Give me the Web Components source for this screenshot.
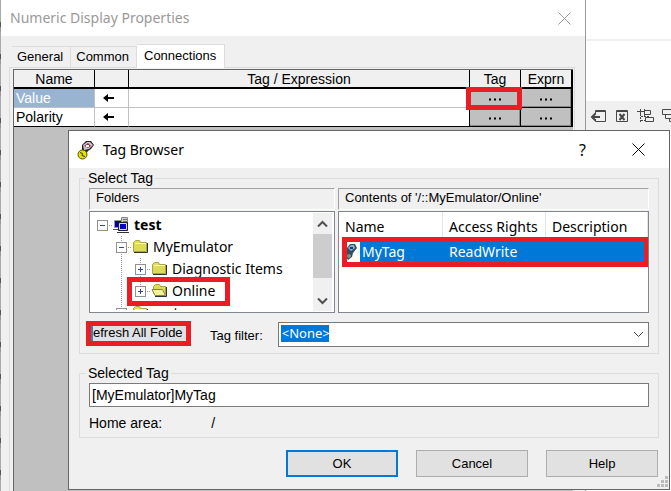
<!DOCTYPE html>
<html lang="en">
<head>
<meta charset="utf-8">
<title>Numeric Display Properties</title>
<style>
    html, body {
        margin: 0px;
        height: 100%;
        overflow: hidden;
        background: #fff;
    }

    body {
        font: 13px/16px "Liberation Sans", Arial, sans-serif;
        color: #000;
        --ui: "Noto Sans", "Segoe UI", sans-serif;
    }
</style>
</head>
<body>
<studio-desktop>
    <app-window class="properties" slot="back" caption="Numeric Display Properties" inactive>
        <tab-strip></tab-strip>
        <connections-grid></connections-grid>
    </app-window>
    <app-window class="browser" slot="front" caption="Tag Browser" help>
        <tag-icon slot="icon"></tag-icon>
        <tag-browser></tag-browser>
    </app-window>
</studio-desktop>

<script>
function attach(element, html) {
    const template = document.createElement("template")
    template.innerHTML = html
    element.attachShadow({mode: "open"}).appendChild(template.content.cloneNode(true))
}

class StudioDesktop extends HTMLElement {
    constructor() {
        super()
        attach(this, `
<style>
    :host { display: block; position: relative; height: 100vh; overflow: hidden; }
    .back { display: flex; flex-direction: column; }
    .ribbon { height: 39px; border-bottom: 2px solid #efefef; }
    .space { height: 60px; }
    .tools {
        display: flex; align-items: center; gap: 8px; height: 29px; box-sizing: border-box;
        margin-left: auto; width: 85px; padding-left: 4px; background: #f0f0f0; overflow: hidden;
    }
    button { border: 0; background: none; padding: 0; flex: none; height: 16px; }
    svg { display: block; fill: none; stroke: #484848; }
    ::slotted(.properties) { position: absolute; inset: 0 85px 0 1px; }
    ::slotted(.browser) { position: absolute; left: 68px; right: 1px; top: 130px; }
    .edge { position: absolute; left: 0; top: 0; bottom: 0; width: 1px;
        background: repeating-linear-gradient(#aaa 0 22px, #555 22px 27px, #999 27px 32px); }
</style>
<div class="back">
    <div class="ribbon"></div>
    <div class="space"></div>
    <div class="tools">
        <button aria-label="Insert"><svg width="17" height="16"><path d="M5.500 6V2.500H15.500V13.500H5.500V11M6 3.500H15"/><path d="M2 9H10M5.500 5.500L2 9L5.500 12.500" stroke-width="2"/></svg></button>
        <button aria-label="Delete"><svg width="14" height="16"><path d="M1.500 2.500H12.500V13.500H1.500ZM2 3.500H12"/><path d="M4.500 6L9.500 12M9.500 6L4.500 12" stroke-width="2"/></svg></button>
        <button aria-label="Align"><svg width="17" height="16"><path d="M3.500 1V6M0 3.500H7M7.500 2.500H13.500V6.500H7.500ZM8.500 9.500H16.500V13.500H8.500ZM7.500 1V8"/><path d="M3.500 6V15M4 8.500H12M4 12.500H8" stroke-dasharray="2 1"/></svg></button>
        <button aria-label="Arrange"><svg width="17" height="16"><path d="M.500 1.500H10.500V6.500H.500ZM10.500 4.500H14.500V10.500H3.500V7M12 8.500H16V13.500H7.500V10.500"/></svg></button>
    </div>
</div>
<div class="edge"></div>
<slot name="back"></slot>
<slot name="front"></slot>`)
    }
}

class AppWindow extends HTMLElement {
    constructor() {
        super()
        attach(this, `
<style>
    :host { display: flex; flex-direction: column; background: #f0f0f0; border: 1px solid #666; box-sizing: border-box; }
    :host([inactive]) { border-width: 0 1px 0 0; border-color: #999; }
    header {
        display: flex; align-items: center; flex: none; height: 37px; box-sizing: border-box;
        padding: 0 24px 0 8px; background: #fff; font: 14px/20px var(--ui);
    }
    :host([inactive]) header { height: 36px; padding: 0 14px 0 9px; color: #999; }
    ::slotted([slot=icon]) { margin-right: 8px; }
    h1 { flex: 1; margin: 0; font: inherit; white-space: nowrap; }
    button { border: 0; padding: 0; background: none; font: 16px/20px var(--ui); color: inherit; }
    .help { margin-right: 46px; }
    :host(:not([help])) .help { display: none; }
    svg { display: block; stroke: currentColor; }
</style>
<header>
    <slot name="icon"></slot>
    <h1></h1>
    <button class="help">?</button>
    <button aria-label="Close"><svg width="13" height="13"><path d="M.500 .500L12.500 12.500M12.500 .500L.500 12.500"/></svg></button>
</header>
<slot></slot>`)
    }

    connectedCallback() {
        this.shadowRoot.querySelector("h1").textContent = this.getAttribute("caption")
    }
}

// Red frame drawn over whatever is slotted in
class MarkFrame extends HTMLElement {
    constructor() {
        super()
        attach(this, `
<style>
    :host { display: block; position: relative; }
    i { position: absolute; inset: var(--mark-inset, -3px); border: 5px solid #ea1c24; pointer-events: none; z-index: 2; }
</style>
<slot></slot><i></i>`)
    }
}

class TabStrip extends HTMLElement {
    constructor() {
        super()
        attach(this, `
<style>
    :host { display: flex; align-items: flex-end; flex: none; padding: 8px 0 0 11px; position: relative; z-index: 1; margin-bottom: -1px; }
    button {
        height: 21px; margin: 0 0 1px; padding: 0 7px 0 5px; border: 1px solid #dcdcdc; border-width: 1px 1px 0 0;
        background: #f0f0f0; font: inherit; color: inherit;
    }
    button:first-child { border-left-width: 1px; }
    button[aria-selected=true] { height: 24px; margin: 0; padding: 0 8px 2px 7px; background: #fff; }
</style>
<button role="tab">General</button>
<button role="tab">Common</button>
<button role="tab" aria-selected="true">Connections</button>`)
        this.shadowRoot.addEventListener("click", event => {
            const tab = event.target.closest("button")
            if (!tab) return
            this.shadowRoot.querySelectorAll("button").forEach(b => b.setAttribute("aria-selected", b == tab))
        })
    }
}

class ConnectionsGrid extends HTMLElement {
    constructor() {
        super()
        const arrow = `<svg width="11" height="9"><path d="M2 4H11" stroke="#000" stroke-width="2"/><path d="M0 4L5 0V8Z"/></svg>`
        attach(this, `
<style>
    :host { display: flex; flex: 1; margin: 0 10px 0 8px; padding: 1px 1px 0 3px; border: 1px solid #dcdcdc; border-bottom: 0; }
    .client { flex: 1; background: #c0c0c0; border: 1px solid #666; border-width: 1px 0 0 1px; }
    table { width: 100%; table-layout: fixed; border-spacing: 0; background: #fff; border-right: 1px solid #000; }
    th, td { padding: 0; border-right: 1px solid #000; box-sizing: border-box; }
    th { height: 19px; border-bottom: 2px solid #000; background: #f0f0f0; font: 14px/16px "Liberation Sans", Arial, sans-serif; }
    td { height: 19px; line-height: 18px; border-right-color: #c0c0c0; border-bottom: 1px solid #c0c0c0; }
    tr:last-child td, .more { border-bottom-color: #000; }
    .more, td:nth-child(3) { border-right-color: #000; }
    .name { padding-left: 2px; font-size: 14px; }
    .current { background: #99b4d1; color: #fff; }
    .arrow { padding-left: 8px; }
    svg { display: block; }
    input { display: block; width: 100%; height: 18px; box-sizing: border-box; border: 0; padding: 0 2px; outline: 0; background: none; font: inherit; }
    .more button {
        display: flex; align-items: center; justify-content: center; width: 100%; height: 18px; padding: 4px 0 0 2px;
        border: 1px solid #888; border-width: 0 1px 1px 0; background: #c0c0c0;
    }
    mark-frame { --mark-inset: -2px -2px -3px -4px; }
</style>
<div class="client">
<table>
    <colgroup><col style="width:81px"><col style="width:34px"><col><col style="width:51px"><col style="width:51px"></colgroup>
    <thead><tr><th>Name</th><th></th><th>Tag / Expression</th><th>Tag</th><th>Exprn</th></tr></thead>
    <tbody></tbody>
</table>
</div>`)
        const dots = `<svg width="13" height="3"><path d="M0 .500h2v2h-2zM5 .500h2v2h-2zM10 .500h2v2h-2z"/></svg>`
        const body = this.shadowRoot.querySelector("tbody")
        ;["Value", "Polarity"].forEach((name, i) => {
            const more = `<button aria-label="Browse tags for ${name}">${dots}</button>`
            const row = document.createElement("tr")
            row.innerHTML = `
                <td class="name ${i == 0 ? "current" : ""}">${name}</td>
                <td class="arrow">${arrow}</td>
                <td><input aria-label="${name} expression"></td>
                <td class="more">${i == 0 ? `<mark-frame>${more}</mark-frame>` : more}</td>
                <td class="more"><button aria-label="Edit ${name} expression">${dots}</button></td>`
            body.appendChild(row)
        })
    }
}

class TagIcon extends HTMLElement {
    constructor() {
        super()
        attach(this, `
<style>
    :host { display: block; flex: none; }
    svg { display: block; }
</style>
<svg width="18" height="20" viewBox="0 0 18 20">
    <path d="M5 5L9 1L14 1L17 5L14 9L11 11L9 14L5 12Z" fill="#222"/>
    <path d="M6 5L10 2L13 2L16 5L12 9L7 10Z" fill="#c8c8c8"/>
    <path d="M7 6L11 3L14 6L11 8Z" fill="#a03050"/><path d="M9 5h3v2h-3z" fill="#fff"/>
    <circle cx="5.500" cy="14.500" r="4.500" fill="#e6e000" stroke="#555500"/>
    <path d="M3 12.500L5.500 13.500L5 15.500L8 16.500" fill="none" stroke="#333"/>
</svg>`)
    }
}

class GroupBox extends HTMLElement {
    constructor() {
        super()
        attach(this, `
<style>
    :host { display: block; }
    fieldset { margin: 0; padding: 2px 9px 6px; border: 1px solid #dcdcdc; min-width: 0; }
    legend { margin-left: -3px; padding: 0 2px; font-size: 14px; line-height: 16px; }
</style>
<fieldset><legend></legend><slot></slot></fieldset>`)
    }

    connectedCallback() {
        this.shadowRoot.querySelector("legend").textContent = this.getAttribute("caption")
    }
}

class ListPane extends HTMLElement {
    constructor() {
        super()
        attach(this, `
<style>
    :host { display: flex; flex-direction: column; gap: 1px; min-width: 0; }
    .caption {
        height: 22px; box-sizing: border-box; padding: 1px 6px; border: 1px solid;
        border-color: #a0a0a0 #fff #fff #a0a0a0; white-space: nowrap;
    }
    .box { display: flex; height: 102px; box-sizing: border-box; border: 1px solid #828790; background: #fff; overflow: hidden; }
</style>
<div class="caption"><slot name="caption"></slot></div>
<div class="box"><slot></slot></div>`)
    }
}

const treeIcons = {
    computer: `<svg width="18" height="18"><path d="M8.500 1.500h6v8h-6z" fill="#ccc" stroke="#888"/><path d="M10 3.500h4M10 5.500h4" stroke="#777"/><path d="M1.500 4.500h7v7h-7z" fill="#0000a0" stroke="#999"/><path d="M0 13.500h6" stroke="#555"/><path d="M5.500 6.500h9v8h-9z" fill="#0000c8" stroke="#222"/><path d="M6.500 7.500h7v6h-7z" fill="none" stroke="#ddd"/><path d="M4 16.500h12" stroke="#333"/></svg>`,
    folder: `<svg width="18" height="16"><path d="M1.500 12.500V3.500L3.500 1.500H7.500L8.500 3.500H14.500V12.500Z" fill="#dedb58" stroke="#a8a448"/><path d="M3 4.500H14" stroke="#fbf8a8"/><path d="M2 13.500H15.500V4" fill="none" stroke="#333"/></svg>`,
    open: `<svg width="18" height="16"><path d="M2.500 10.500V3.500L4.500 1.500H8.500L9.500 3.500H14.500V11.500Z" fill="#dedb58" stroke="#a8a448"/><path d="M1 6.500H11.500L14.500 12.500H4Z" fill="#f5f19a" stroke="#8a8838"/><path d="M4 13.500H15.500V4" fill="none" stroke="#333"/></svg>`
}

class TreeNode extends HTMLElement {
    constructor() {
        super()
        attach(this, `
<style>
    :host { display: flex; align-items: center; height: 22px; flex: none; font: 14px/20px var(--ui); white-space: nowrap; }
    :host([kind=computer]) { font-weight: bold; }
    svg { display: block; flex: none; }
    .icon { width: 18px; margin: 0 3px 0 1px; }
</style>
<slot></slot>`)
    }

    connectedCallback() {
        const depth = Number(this.getAttribute("depth"))
        const state = this.getAttribute("state")
        let html = ""
        for (let level = 0; level <= depth; level++) {
            const own = level == depth
            let lines = ""
            if (level > 0) {
                lines = `<path d="M9.500 0V${own && this.hasAttribute("last") ? 11 : 22}" stroke="#999" stroke-dasharray="1 1"/>`
            }
            if (own) {
                lines += `<path d="M10 11.500H19" stroke="#999" stroke-dasharray="1 1"/>
                    <rect x="4.500" y="6.500" width="10" height="10" fill="#fff" stroke="#919191"/>
                    <path d="M7 11.500H12${state == "plus" ? "M9.500 9V14" : ""}" stroke="#2a4a9a"/>`
            }
            html += `<svg width="19" height="22">${lines}</svg>`
        }
        html += `<span class="icon">${treeIcons[this.getAttribute("kind")]}</span>`
        this.shadowRoot.querySelector("slot").insertAdjacentHTML("beforebegin", html)
    }
}

class ScrollRail extends HTMLElement {
    constructor() {
        super()
        attach(this, `
<style>
    :host { display: flex; flex-direction: column; width: 19px; flex: none; margin: 1px 2px 1px 0; background: #f0f0f0; }
    button { display: flex; align-items: center; justify-content: center; height: 21px; padding: 0; border: 0; background: none; flex: none; }
    .track { flex: 1; }
    .thumb { height: 44px; background: #cdcdcd; }
    svg { fill: none; stroke: #505050; stroke-width: 2; }
</style>
<button aria-label="Scroll up"><svg width="11" height="8"><path d="M1 6.500L5.500 2L10 6.500"/></svg></button>
<div class="track"><div class="thumb"></div></div>
<button aria-label="Scroll down"><svg width="11" height="8"><path d="M1 1.500L5.500 6L10 1.500"/></svg></button>`)
    }
}

class TagList extends HTMLElement {
    constructor() {
        super()
        attach(this, `
<style>
    :host { display: block; flex: 1; font: 14px/20px var(--ui); }
    table { width: 100%; table-layout: fixed; border-spacing: 0; }
    th { height: 25px; padding: 4px 0 0 6px; border-right: 1px solid #e5e5e5; box-sizing: border-box; font-weight: normal; text-align: left; white-space: nowrap; }
    td { padding: 0; }
    mark-frame { --mark-inset: 0 -1px 0 3px; }
    .row { display: grid; grid-template-columns: 103px 103px 1fr; align-items: center; padding: 5px 5px 5px 7px; color: #fff;
        background: linear-gradient(#0078d7, #0078d7) 21px 5px / 100% 20px no-repeat; }
    .name { display: flex; height: 20px; }
    .name svg { margin-right: 2px; }
</style>
<table>
    <colgroup><col style="width:104px"><col style="width:103px"><col></colgroup>
    <thead><tr><th>Name</th><th>Access Rights</th><th>Description</th></tr></thead>
    <tbody><tr><td colspan="3"><mark-frame><div class="row">
        <span class="name"><svg width="14" height="20"><path d="M1 6L4 2L9 2L11 6L7 11L6 15L2 18L0 15L1 11Z" fill="#34505f"/><path d="M2 6L5 3L8 3L9 6L5 9Z" fill="#77b5e0"/><path d="M4 5h3v2h-3z" fill="#123c78"/><circle cx="3" cy="14" r="2" fill="#6b9b8d"/></svg>MyTag</span>
        <span>ReadWrite</span><span></span>
    </div></mark-frame></td></tr></tbody>
</table>`)
    }
}

class PushButton extends HTMLElement {
    constructor() {
        super()
        attach(this, `
<style>
    :host { display: block; width: 112px; }
    button { width: 100%; height: 27px; padding: 0; border: 1px solid #adadad; background: #e1e1e1; font: inherit; color: inherit; }
    :host([primary]) button { border: 2px solid #0078d7; }
</style>
<button><slot></slot></button>`)
    }
}

class TagBrowser extends HTMLElement {
    constructor() {
        super()
        attach(this, `
<style>
    :host { display: flex; flex-direction: column; gap: 11px; padding: 2px 10px 12px; position: relative; }
    .panes { display: grid; grid-template-columns: 246px 1fr; gap: 3px; }
    .tree { flex: 1; padding: 2px 0 0 3px; margin-bottom: 2px; min-width: 0; overflow: hidden; }
    .tree mark-frame { --mark-inset: -3px 0 -4px 34px; width: 137px; }
    .filter { display: grid; grid-template-columns: 100px auto 1fr; align-items: center; margin-top: 8px; }
    .filter label { margin: 4px 14px 0 21px; }
    .refresh { width: 100%; height: 21px; padding: 0; border: 0; background: #e1e1e1; font: inherit; color: inherit;
        white-space: nowrap; overflow: hidden; border-left: 4px solid #3c7fc0; text-align: left; }
    .filter mark-frame { --mark-inset: -2px -2px -2px -3px; height: 21px; margin-bottom: 2px; }
    .combo { display: grid; align-items: center; margin: 1px 0 0 1px; }
    .combo > * { grid-area: 1 / 1; }
    select {
        appearance: none; width: 100%; height: 25px; padding: 0 3px 2px; border: 1px solid #7a7a7a; border-radius: 0; color: #fff;
        background: #fff linear-gradient(#0078d7, #0078d7) 2px 2px / 48px 17px no-repeat; font: 13px/17px var(--ui);
    }
    option { color: #000; }
    .combo svg { justify-self: end; margin-right: 5px; pointer-events: none; }
    .tag { display: block; width: 100%; height: 24px; box-sizing: border-box; padding: 0 2px; border: 1px solid #7a7a7a; font: 14px/16px "Liberation Sans", Arial, sans-serif; }
    .home { display: flex; gap: 49px; margin-top: 8px; font-size: 14px; line-height: 16px; }
    footer { display: flex; justify-content: flex-end; gap: 18px; padding-right: 1px; margin-top: 1px; }
    .grip { position: absolute; right: 1px; bottom: 1px; fill: #bcbcbc; }
</style>
<group-box caption="Select Tag">
    <div class="panes">
        <list-pane>
            <span slot="caption">Folders</span>
            <div class="tree">
                <tree-node depth="0" state="minus" kind="computer">test</tree-node>
                <tree-node depth="1" state="minus" kind="folder">MyEmulator</tree-node>
                <tree-node depth="2" state="plus" kind="folder">Diagnostic Items</tree-node>
                <mark-frame><tree-node depth="2" state="plus" kind="open" last>Online</tree-node></mark-frame>
                <tree-node depth="1" state="plus" kind="folder">system</tree-node>
            </div>
            <scroll-rail></scroll-rail>
        </list-pane>
        <list-pane>
            <span slot="caption">Contents of '/::MyEmulator/Online'</span>
            <tag-list></tag-list>
        </list-pane>
    </div>
    <div class="filter">
        <mark-frame><button class="refresh">efresh All Folde</button></mark-frame>
        <label for="filter">Tag filter:</label>
        <div class="combo">
            <select id="filter"><option>&lt;None&gt;</option></select>
            <svg width="11" height="7" fill="none" stroke="#444"><path d="M1 1L5.500 5.500L10 1"/></svg>
        </div>
    </div>
</group-box>
<group-box caption="Selected Tag">
    <input class="tag" aria-label="Selected Tag" value="[MyEmulator]MyTag">
    <div class="home"><span>Home area:</span><span>/</span></div>
</group-box>
<footer>
    <push-button primary>OK</push-button>
    <push-button>Cancel</push-button>
    <push-button>Help</push-button>
</footer>
<svg class="grip" width="12" height="12"><path d="M9 0h3v3h-3zM9 4h3v3h-3zM9 8h3v3h-3zM5 4h3v3h-3zM5 8h3v3h-3zM1 8h3v3h-3z"/></svg>`)
    }
}

window.customElements.define("mark-frame", MarkFrame)
window.customElements.define("tag-icon", TagIcon)
window.customElements.define("tab-strip", TabStrip)
window.customElements.define("connections-grid", ConnectionsGrid)
window.customElements.define("group-box", GroupBox)
window.customElements.define("list-pane", ListPane)
window.customElements.define("tree-node", TreeNode)
window.customElements.define("scroll-rail", ScrollRail)
window.customElements.define("tag-list", TagList)
window.customElements.define("push-button", PushButton)
window.customElements.define("tag-browser", TagBrowser)
window.customElements.define("app-window", AppWindow)
window.customElements.define("studio-desktop", StudioDesktop)
</script>
</body>
</html>
